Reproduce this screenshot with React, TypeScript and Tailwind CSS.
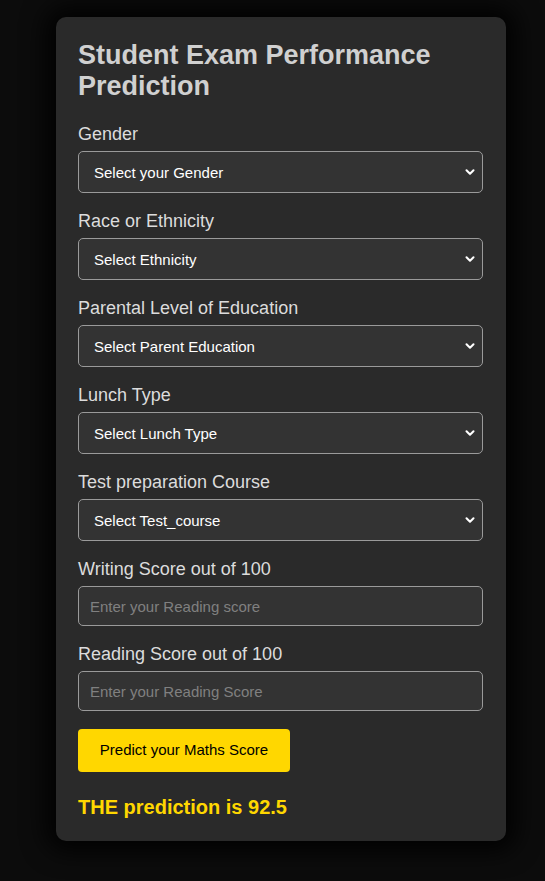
import { ChevronDown } from "lucide-react";

const selects = [
  { label: "Gender", placeholder: "Select your Gender" },
  { label: "Race or Ethnicity", placeholder: "Select Ethnicity" },
  { label: "Parental Level of Education", placeholder: "Select Parent Education" },
  { label: "Lunch Type", placeholder: "Select Lunch Type" },
  { label: "Test preparation Course", placeholder: "Select Test_course" },
];

const inputs = [
  { label: "Writing Score out of 100", placeholder: "Enter your Reading score" },
  { label: "Reading Score out of 100", placeholder: "Enter your Reading Score" },
];

export default function App() {
  return (
    <div
      className="min-h-[881px] bg-[#0c0c0c] pt-[17px] pb-[40px]"
      style={{ fontFamily: '"Liberation Sans", Arial, sans-serif' }}
    >
      <div className="ml-[56px] w-[450px] rounded-[10px] bg-[#2a2a2a] pl-[22px] pr-[23px] pt-[23px] pb-[22px] shadow-[0_0_25px_10px_rgba(0,0,0,0.9)]">
        <h1 className="text-[27px] font-bold leading-[31px] text-[#d0d0d0]">
          Student Exam Performance Prediction
        </h1>

        <div className="mt-[22px]">
          {selects.map((s) => (
            <div key={s.label} className="mb-[18px]">
              <label className="block text-[18px] leading-[21px] text-[#dcdcdc]">{s.label}</label>
              <div className="relative mt-[6px]">
                <select
                  defaultValue=""
                  className="h-[42px] w-full appearance-none rounded-[5px] border border-[#9a9a9a] bg-[#333333] pl-[15px] pt-[2px] text-[15px] text-white outline-none"
                >
                  <option value="" disabled>
                    {s.placeholder}
                  </option>
                </select>
                <ChevronDown
                  className="pointer-events-none absolute right-[6px] top-[14px] h-[14px] w-[14px] text-white"
                  strokeWidth={3.5}
                />
              </div>
            </div>
          ))}

          {inputs.map((i) => (
            <div key={i.label} className="mb-[18px]">
              <label className="block text-[18px] leading-[21px] text-[#dcdcdc]">{i.label}</label>
              <input
                type="number"
                placeholder={i.placeholder}
                className="mt-[6px] h-[40px] w-full rounded-[5px] border border-[#9a9a9a] bg-[#333333] px-[11px] text-[15px] text-white outline-none placeholder:text-[#808080]"
              />
            </div>
          ))}
        </div>

        <button className="h-[43px] w-[212px] rounded-[4px] bg-[#ffd700] text-[15px] text-black">
          Predict your Maths Score
        </button>

        <h2 className="mt-[24px] text-[20px] font-bold leading-[23px] text-[#ffd700]">
          THE prediction is 92.5
        </h2>
      </div>
    </div>
  );
}
